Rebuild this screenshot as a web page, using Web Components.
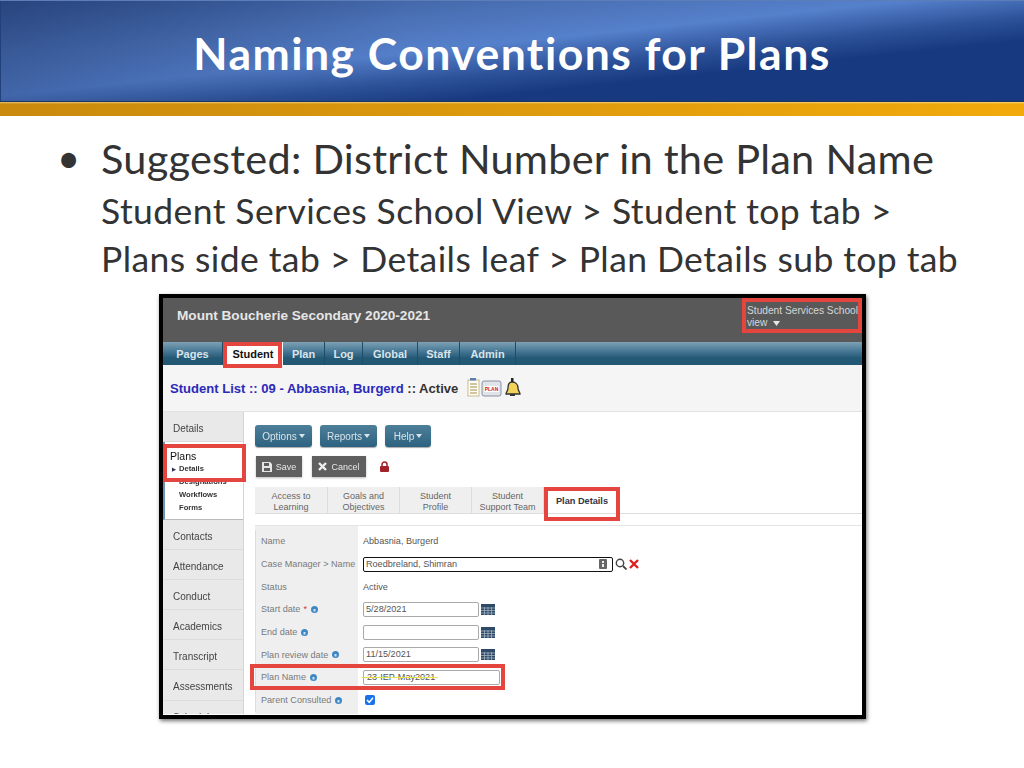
<!DOCTYPE html>
<html><head><meta charset="utf-8"><style>
html,body{margin:0;padding:0;background:#fff;width:1024px;height:768px;overflow:hidden}
</style></head><body>
<slide-deck>
<slide-header>Naming Conventions for Plans</slide-header>
<slide-bullets></slide-bullets>
<sis-shot></sis-shot>
</slide-deck>
<script>
function def(name,html){customElements.define(name,class extends HTMLElement{constructor(){super();this.attachShadow({mode:'open'}).innerHTML=html}})}
def('slide-deck',`<style>:host{display:flex;flex-direction:column;width:1024px;height:768px;background:#fff;overflow:hidden}</style><slot></slot>`);
def('slide-header',`<style>
:host{display:block;flex:none}
.b{height:101px;border-bottom:1px solid #1d3560;display:flex;justify-content:center;align-items:center;background:linear-gradient(90deg,rgba(20,40,90,.3),rgba(20,40,90,0) 40%),linear-gradient(174deg,#30508c 0,#4a70b4 28%,#5580cb 46%,#2d5299 60%,#17397f 71%,#17397f 100%);box-shadow:inset 0 1px 0 #5c7db8,inset 1px 0 0 #22407a}
h1{margin:0;font:700 44.5px/1 Lato,sans-serif;letter-spacing:1.45px;font-variant-ligatures:none;color:#fff;position:relative;top:3px}
.g2{height:14px;background:linear-gradient(180deg,rgba(255,240,190,.6) 0,rgba(255,240,190,0) 2px),linear-gradient(90deg,#c98a0d,#dd9a0d 50%,#f2aa0b)}
</style><div class="b"><h1><slot></slot></h1></div><div class="g2"></div>`);
def('slide-bullets',`<style>
:host{display:flex;flex:none;height:178px;box-sizing:border-box;padding:16px 0 0 57px;font-family:Lato,sans-serif;color:#333;font-variant-ligatures:none}
.d{width:44px;font-size:40px;line-height:52px}
.a{font-size:41.5px;line-height:52px;height:55px;letter-spacing:.24px}
.c{font-size:35.5px;letter-spacing:.42px;line-height:48px}
</style><div class="d">•</div><div><div class="a">Suggested: District Number in the Plan Name</div><div class="c">Student Services School View &gt; Student top tab &gt;<br>Plans side tab &gt; Details leaf &gt; Plan Details sub top tab</div></div>`);
def('red-box',`<style>:host{position:absolute;box-sizing:border-box;border:4px solid #e5453f;display:block}</style>`);
def('sis-top',`<style>
:host{display:flex;justify-content:space-between;height:44px;background:#595959;font-family:"Liberation Sans",sans-serif;flex:none}
.t{font-weight:700;font-size:13.6px;color:#e6e6e6;margin:10px 0 0 14px}
.v{font-size:10.2px;line-height:11.5px;color:#d6d6d6;width:112px;margin:7px 3px 0 0}
</style><div class="t">Mount Boucherie Secondary 2020-2021</div><div class="v">Student Services School view &nbsp;<svg width="7" height="5" viewBox="0 0 7 5"><path d="M0 0h7L3.500 5z" fill="#e6e6e6"/></svg></div>`);
def('sis-tabs',`<style>
:host{display:flex;flex:none;height:23px;background:linear-gradient(#7ea1b4,#4d7d99 35%,#245976 70%,#235874);font:700 11px "Liberation Sans",sans-serif;color:#d9e4ea}
span{display:flex;align-items:center;justify-content:center;border-right:1px solid #1f4d66;box-sizing:border-box}
.on{background:#fff;color:#111;border:0}
</style><span style="width:60px">Pages</span><span class="on" style="width:60px">Student</span><span style="width:42px">Plan</span><span style="width:38px">Log</span><span style="width:55px">Global</span><span style="width:42px">Staff</span><span style="width:56px">Admin</span>`);
def('sis-crumb',`<style>
:host{display:flex;align-items:center;flex:none;height:47px;background:#f5f5f5;border-bottom:1px solid #e2e2e2;box-sizing:border-box;padding:0 0 0 7px;font:700 13.05px "Liberation Sans",sans-serif;color:#2a2ab8}
b{color:#333}svg{margin-left:9px;position:relative}
</style><span>Student List :: 09 - Abbasnia, Burgerd <b>:: Active</b></span>
<svg width="54" height="20" viewBox="0 0 54 20">
<rect x="1" y="2" width="11" height="16" fill="#fff" stroke="#c9b98a"/><rect x="3" y="0" width="6" height="2.500" fill="#5a7fb0"/><path d="M3 6h7M3 9h7M3 12h7M3 15h7" stroke="#a58b3a"/>
<rect x="15" y="3" width="19" height="15" rx="2" fill="#dfe3ea" stroke="#8b92a3"/><rect x="17" y="8" width="15" height="6" fill="#fff"/><text x="24.500" y="13" font-size="5" font-weight="700" text-anchor="middle" fill="#c22" font-family="Liberation Sans">PLAN</text>
<path d="M45 4c-3 0-4 3-4 6 0 3-2 4-2 6h14c0-2-2-3-2-6 0-3-2-6-6-6z" fill="#f3d35a" stroke="#333" stroke-width="1.300"/><rect x="44" y="0" width="2.500" height="4" fill="#222"/><rect x="43" y="16" width="5" height="2" fill="#333"/></svg>`);
def('sis-side',`<style>
:host{display:block;width:80px;flex:none;background:#e9e9e9;border-right:1px solid #d5d5d5;font:10px "Liberation Sans",sans-serif;color:#444;overflow:hidden;box-sizing:content-box;height:302px}
.i{height:30.100px;box-sizing:border-box;padding:11px 0 0 10px;border-bottom:1px solid #dcdcdc}
.p{height:78px;background:#fff;box-sizing:border-box;padding:9px 0 0 5px;border-left:2px solid #6b94b4;border-bottom:1px solid #bbb;color:#222;width:81px}
.p>div:first-child{font-size:10.500px;color:#111;height:11px;line-height:11px}
.s{font-size:7.600px;font-weight:700;height:13px;line-height:13px;margin-left:9px;color:#333}
.s i{font-style:normal;font-size:5px;margin:0 3px 0 -7px;color:#335}
</style><div class="i" style="height:30px">Details</div>
<div class="p"><div>Plans</div><div class="s"><i>▶</i>Details</div><div class="s">Designations</div><div class="s">Workflows</div><div class="s">Forms</div></div>
<div class="i">Contacts</div><div class="i">Attendance</div><div class="i">Conduct</div><div class="i">Academics</div><div class="i">Transcript</div><div class="i">Assessments</div><div class="i">Schedule</div>`);
def('sis-actions',`<style>
:host{display:block;flex:none;font:10px "Liberation Sans",sans-serif;padding:13px 0 0 11px;height:75px;box-sizing:border-box}
.r{display:flex;gap:8px;height:22px}
.b{background:linear-gradient(#4e7f9a,#2c6280);color:#d8e4ea;border-radius:3px;display:flex;align-items:center;justify-content:center;gap:2px;box-sizing:border-box;box-shadow:0 1px 1px #aaa}
.r2{display:flex;align-items:center;height:21px;margin:9px 0 0 1px}
.g{background:#5f5f5f;color:#e6e6e6;height:21px;display:flex;align-items:center;justify-content:center;gap:4px;box-shadow:0 1px 2px #bbb;font-size:9px}
</style>
<div class="r"><span class="b" style="width:57px">Options<svg width="6" height="4" viewBox="0 0 6 4"><path d="M0 0h6L3 4z" fill="#d8e4ea"/></svg></span><span class="b" style="width:57px">Reports<svg width="6" height="4" viewBox="0 0 6 4"><path d="M0 0h6L3 4z" fill="#d8e4ea"/></svg></span><span class="b" style="width:46px">Help<svg width="6" height="4" viewBox="0 0 6 4"><path d="M0 0h6L3 4z" fill="#d8e4ea"/></svg></span></div>
<div class="r2"><span class="g" style="width:46px"><svg width="10" height="10" viewBox="0 0 10 10"><path d="M0 0h8l2 2v8H0z" fill="#e6e6e6"/><rect x="2" y="1" width="5" height="3" fill="#5f5f5f"/><rect x="2" y="6" width="6" height="3" fill="#5f5f5f"/></svg>Save</span><span class="g" style="width:54px;margin-left:10px"><svg width="9" height="9" viewBox="0 0 9 9"><path d="M1 1l7 7M8 1L1 8" stroke="#eee" stroke-width="2.400"/></svg>Cancel</span><svg style="margin-left:14px" width="9" height="11" viewBox="0 0 9 11"><path d="M2 5V3.500a2.500 2.500 0 0 1 5 0V5" fill="none" stroke="#a3232b" stroke-width="1.500"/><rect x="0" y="5" width="9" height="6" rx="1" fill="#a3232b"/></svg></div>`);
def('sis-subtabs',`<style>
:host{display:flex;flex:none;height:26px;margin-left:11px;font:9px/10.5px "Liberation Sans",sans-serif;color:#666;border-bottom:1px solid #ddd}
span{display:flex;align-items:center;justify-content:center;text-align:center;width:72px;background:#efefef;border-right:1px solid #ddd;box-sizing:border-box;padding-top:3px}
.on{background:#fff;color:#334;font-weight:700;width:76px;border:0;font-size:9.200px}
</style><span style="width:73px">Access to<br>Learning</span><span>Goals and<br>Objectives</span><span>Student<br>Profile</span><span>Student<br>Support Team</span><span class="on">Plan Details</span>`);
const inf=`<svg width="7" height="7" viewBox="0 0 7 7" style="margin-left:4px"><circle cx="3.500" cy="3.500" r="3.500" fill="#3f87c4"/><rect x="2.500" y="3" width="2" height="2.500" fill="#cfe3f5"/></svg>`;
const cal=`<svg width="14" height="11" viewBox="0 0 14 11" style="margin-left:2px"><rect width="14" height="11" fill="#2f4a66"/><path d="M0 4h14M0 6.500h14M0 9h14M3.500 3v8M7 3v8M10.500 3v8" stroke="#9fb0bf" stroke-width=".8"/></svg>`;
def('sis-form',`<style>
:host{display:grid;flex:1;min-height:0;margin:11px 0 0 11px;padding-top:4px;grid-template-columns:103px 1fr;grid-auto-rows:22.700px;font:9.100px "Liberation Sans",sans-serif;color:#555;overflow:hidden;border-top:1px solid #e4e4e4;align-content:start;background:linear-gradient(90deg,#efefef 103px,#fff 103px)}
.l{display:flex;align-items:center;padding-left:5px;color:#7a7a7a;white-space:nowrap;border-left:1px solid #ddd}
.v{display:flex;align-items:center;padding-left:5px}
.in{box-sizing:border-box;height:15px;width:116px;border:1px solid #a9a9a9;border-radius:2px;background:#fff;padding-left:2px;line-height:13px;color:#555;display:block}
em{color:#d33;font-style:normal;margin-left:3px}
</style>
<div class="l">Name</div><div class="v">Abbasnia, Burgerd</div>
<div class="l">Case Manager &gt; Name</div><div class="v"><span class="in" style="width:250px;border:1.500px solid #111;color:#555;display:flex;justify-content:space-between;align-items:center;padding-right:5px">Roedbreland, Shimran<svg width="8" height="10" viewBox="0 0 8 10"><rect width="8" height="10" rx="1" fill="#666"/><rect x="3" y="2" width="2" height="2" fill="#eee"/><rect x="3" y="5" width="2" height="3" fill="#eee"/></svg></span><svg style="margin-left:2px" width="12" height="12" viewBox="0 0 12 12"><circle cx="5" cy="5" r="3.700" fill="none" stroke="#444" stroke-width="1.400"/><path d="M8 8l3.500 3.500" stroke="#444" stroke-width="1.800"/></svg><svg style="margin-left:2px" width="10" height="10" viewBox="0 0 10 10"><path d="M1 1l8 8M9 1L1 9" stroke="#e02020" stroke-width="2.400"/></svg></div>
<div class="l">Status</div><div class="v">Active</div>
<div class="l">Start date<em>*</em>${inf}</div><div class="v"><span class="in">5/28/2021</span>${cal}</div>
<div class="l">End date${inf}</div><div class="v"><span class="in"></span>${cal}</div>
<div class="l">Plan review date${inf}</div><div class="v"><span class="in">11/15/2021</span>${cal}</div>
<div class="l">Plan Name${inf}</div><div class="v"><span class="in" style="width:137px;position:relative;padding-left:3px">23-IEP-May2021<i style="position:absolute;left:-2px;top:6px;width:76px;height:1px;background:#e8e24a"></i></span></div>
<div class="l">Parent Consulted${inf}</div><div class="v"><svg style="margin-left:2px" width="10" height="10" viewBox="0 0 10 10"><rect width="10" height="10" rx="2" fill="#1a73e8"/><path d="M2 5l2.200 2.300L8 2.800" fill="none" stroke="#fff" stroke-width="1.500"/></svg></div>`);
def('sis-main',`<style>:host{display:flex;flex-direction:column;flex:1;min-width:0;height:302px}</style><sis-actions></sis-actions><sis-subtabs></sis-subtabs><sis-form></sis-form>`);
def('sis-shot',`<style>
:host{display:block;position:relative;flex:none;box-sizing:border-box;width:707px;height:425px;margin-left:159px;border:4px solid #000;background:#fff;box-shadow:1px 2px 4px rgba(0,0,0,.55)}
.w{position:absolute;inset:0;overflow:hidden;display:flex;flex-direction:column;filter:blur(.45px)}
.m{display:flex;flex:1;min-height:0}
</style><div class="w"><sis-top></sis-top><sis-tabs></sis-tabs><sis-crumb></sis-crumb><div class="m"><sis-side></sis-side><sis-main></sis-main></div></div>
<red-box style="left:579px;top:0;width:120px;height:35px"></red-box>
<red-box style="left:60px;top:44px;width:59px;height:26px"></red-box>
<red-box style="left:0;top:146px;width:83px;height:38px"></red-box>
<red-box style="left:381px;top:189px;width:76px;height:34px"></red-box>
<red-box style="left:87px;top:366px;width:255px;height:26px"></red-box>`);
</script>
</body></html>
